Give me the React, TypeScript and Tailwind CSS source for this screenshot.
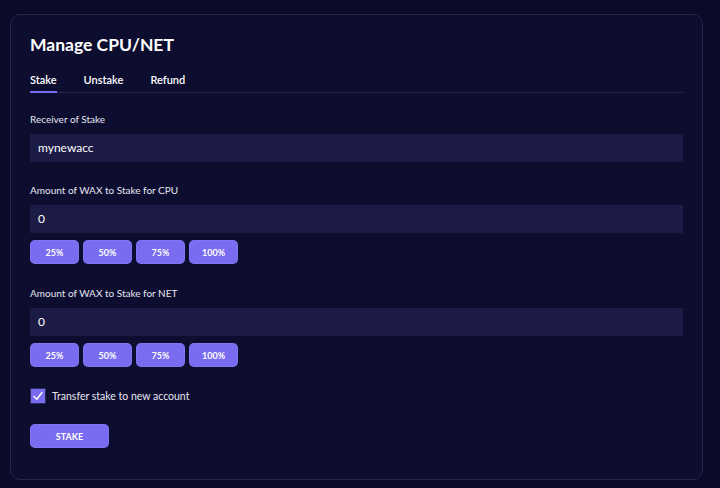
import React, { useState } from 'react';

const PercentButtons: React.FC = () => (
  <div className="flex gap-1 mt-[7px]">
    {['25%', '50%', '75%', '100%'].map((p) => (
      <button
        key={p}
        className="w-[49px] h-[24px] rounded-[5px] bg-[#7a6cf0] text-white text-[9px] font-bold leading-none border border-[#9185f5]/40"
      >
        {p}
      </button>
    ))}
  </div>
);

export default function App() {
  const [tab, setTab] = useState('Stake');
  const [checked, setChecked] = useState(true);

  return (
    <div
      className="w-[720px] h-[488px] bg-[#0a0a29] pt-[14px] pl-[10px] pr-[17px]"
      style={{ fontFamily: 'Lato, "Noto Sans", sans-serif' }}
    >
      <div className="h-[466px] rounded-[10px] bg-[#0d0d30] border border-[#25254d] px-[19px] pt-[18px]">
        <h1 className="text-[17.5px] font-bold text-white leading-[24px]">Manage CPU/NET</h1>

        <div className="flex gap-[27px] mt-[15px] border-b border-[#25254d] text-[11px] font-semibold leading-[16px] text-white">
          {['Stake', 'Unstake', 'Refund'].map((t) => (
            <button
              key={t}
              onClick={() => setTab(t)}
              className={`pb-[3px] border-b-2 -mb-px ${tab === t ? 'border-[#7a6cf0]' : 'border-transparent'}`}
            >
              {t}
            </button>
          ))}
        </div>

        <div className="mt-[19px] text-[10px] leading-[14px] text-[#e6e6f0]">Receiver of Stake</div>
        <div className="mt-[8px] h-[28px] bg-[#1b1b45] px-[8px] flex items-center text-[12px] text-white">
          mynewacc
        </div>

        <div className="mt-[21px] text-[10px] leading-[14px] text-[#e6e6f0]">Amount of WAX to Stake for CPU</div>
        <div className="mt-[8px] h-[28px] bg-[#1b1b45] px-[8px] flex items-center text-[12px] text-white">0</div>
        <PercentButtons />

        <div className="mt-[22px] text-[10px] leading-[14px] text-[#e6e6f0]">Amount of WAX to Stake for NET</div>
        <div className="mt-[8px] h-[28px] bg-[#1b1b45] px-[8px] flex items-center text-[12px] text-white">0</div>
        <PercentButtons />

        <label className="mt-[21px] flex items-center gap-[6px] text-[10.5px] leading-[16px] text-[#e6e6f0]">
          <span
            onClick={() => setChecked(!checked)}
            className="w-[16px] h-[16px] bg-[#7a6cf0] border border-[#2a2a55] flex items-center justify-center"
          >
            {checked && (
              <svg width="12" height="12" viewBox="0 0 12 12" fill="none">
                <path d="M2 6.5 L4.8 9.2 L10 2.5" stroke="white" strokeWidth="1.4" strokeLinecap="round" strokeLinejoin="round" />
              </svg>
            )}
          </span>
          Transfer stake to new account
        </label>

        <button className="mt-[20px] w-[79px] h-[24px] rounded-[5px] bg-[#7a6cf0] text-white text-[9px] font-bold leading-none border border-[#9185f5]/40">
          STAKE
        </button>
      </div>
    </div>
  );
}
